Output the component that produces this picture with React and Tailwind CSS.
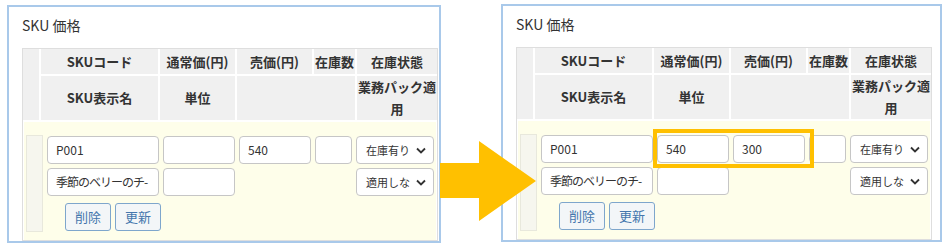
import React from "react";

const cols = "grid-cols-[16px_117px_75px_75px_41px_80px]";

function Th({ children, className = "" }) {
    return (
        <div className={"bg-[#f0f0f0] flex items-center justify-center text-center font-bold text-[13px] text-[#333] " + className}>
            {children}
        </div>
    );
}

function Field({ value, className = "" }) {
    return (
        <div className={"h-[28px] shrink-0 border border-[#c6c6c6] rounded-[4px] bg-white text-[12px] text-[#333] pl-[8px] flex items-center overflow-hidden whitespace-nowrap " + className}>
            {value}
        </div>
    );
}

function Select({ value }) {
    return (
        <div className="w-[78px] h-[28px] shrink-0 border border-[#c6c6c6] rounded-[4px] bg-white text-[11px] text-[#333] pl-[9px] pr-[7px] flex items-center justify-between whitespace-nowrap overflow-hidden">
            <span>{value}</span>
            <svg width="10" height="7" viewBox="0 0 10 7">
                <path d="M1 1.5 L5 5.5 L9 1.5" fill="none" stroke="#333" strokeWidth="1.8" />
            </svg>
        </div>
    );
}

function Panel({ regular, sale, className = "" }) {
    return (
        <div className={"h-[238px] border-2 border-[#a9c9ea] bg-white pl-[13px] pt-[8px] overflow-hidden " + className}>
            <div className="h-[20px] leading-[20px] text-[14px] text-[#333]">SKU 価格</div>
            <div className="mt-[13px] w-[416px] border border-[#dedede] bg-white">
                <div className={"grid " + cols + " grid-rows-[25px_44px] gap-[2px]"}>
                    <div className="row-span-2 bg-[#f0f0f0]" />
                    <Th>SKUコード</Th>
                    <Th>通常価(円)</Th>
                    <Th>売価(円)</Th>
                    <Th>在庫数</Th>
                    <Th>在庫状態</Th>
                    <Th>SKU表示名</Th>
                    <Th>単位</Th>
                    <div className="col-span-2 bg-[#f0f0f0]" />
                    <Th className="leading-[22px]">業務パック適用</Th>
                </div>
                <div className="mt-[2px] mx-[1px] h-[118px] bg-[#fefeea] flex pl-[2px] pt-[13px]">
                    <div className="w-[17px] h-[97px] shrink-0 border border-[#e8e8dc] bg-[#f6f6ee]" />
                    <div className="ml-[4px] mt-[1px] flex flex-col">
                        <div className="flex gap-[4px]">
                            <Field value="P001" className="w-[112px]" />
                            <Field value={regular} className="w-[72px]" />
                            <Field value={sale} className="w-[72px]" />
                            <Field value="" className="w-[37px]" />
                            <Select value="在庫有り" />
                        </div>
                        <div className="flex gap-[4px] mt-[4px]">
                            <Field value="季節のベリーのチ-" className="w-[112px] tracking-[-1px]" />
                            <Field value="" className="w-[72px]" />
                            <div className="w-[113px] shrink-0" />
                            <Select value="適用しな" />
                        </div>
                        <div className="flex gap-[4px] mt-[7px] ml-[18px]">
                            <button className="w-[46px] h-[28px] border border-[#7ea6cc] bg-[#f3f6f8] text-[#4577ad] text-[13px] rounded-[3px]">削除</button>
                            <button className="w-[46px] h-[28px] border border-[#7ea6cc] bg-[#f3f6f8] text-[#4577ad] text-[13px] rounded-[3px]">更新</button>
                        </div>
                    </div>
                </div>
            </div>
        </div>
    );
}

export default function App() {
    return (
        <div className="relative w-[947px] h-[251px] bg-white flex items-start overflow-hidden font-['Noto_Sans_CJK_JP',sans-serif]">
            <Panel regular="" sale="540" className="ml-[7px] mt-[5px] w-[434px] shrink-0" />
            <Panel regular="540" sale="300" className="ml-[60px] mt-[4px] w-[441px] shrink-0" />
            {/* arrow */}
            <svg className="absolute left-[440px] top-[141px]" width="96" height="80" viewBox="0 0 96 80">
                <polygon points="0,22 39,22 39,0 96,40 39,80 39,57 0,57" fill="#ffc000" />
            </svg>
            <div className="absolute left-[653px] top-[129px] w-[161px] h-[39px] border-4 border-[#ffc000]" />
        </div>
    );
}
